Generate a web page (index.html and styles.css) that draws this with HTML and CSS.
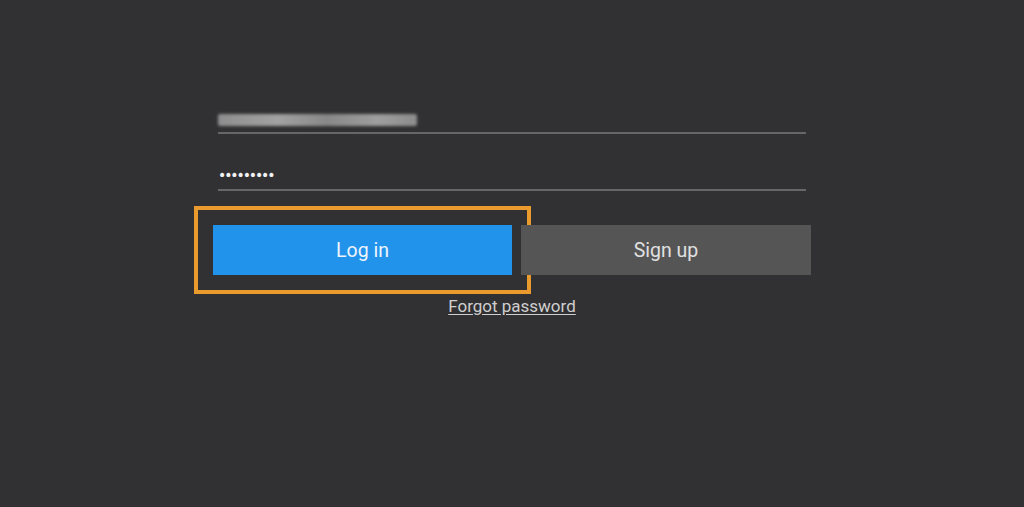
FILE: index.html
```html
<!DOCTYPE html>
<html>
<head>
<meta charset="utf-8">
<link rel="stylesheet" href="styles.css">
</head>
<body>
<main class="form">
  <div class="field field-email">
    <span class="redacted" aria-label="email (hidden)"></span>
  </div>
  <div class="field field-password">
    <span class="dots">•••••••••</span>
  </div>
  <div class="actions">
    <button class="btn btn-login">Log in</button>
    <button class="btn btn-signup">Sign up</button>
  </div>
  <div class="forgot-row">
    <a class="forgot" href="#">Forgot password</a>
  </div>
</main>
</body>
</html>
```

FILE: styles.css
```css
html, body {
  margin: 0;
  padding: 0;
  height: 100%;
}
body {
  background: #313133;
  font-family: Roboto, "Liberation Sans", sans-serif;
  overflow: hidden;
}
.form {
  width: 598px;
  margin-left: 213px;
  padding-top: 101px;
  display: flex;
  flex-direction: column;
}
.field {
  margin: 0 5px;
  border-bottom: 2px solid #666668;
  display: flex;
  align-items: flex-end;
}
.field-email {
  height: 31px;
}
.redacted {
  display: block;
  width: 199px;
  height: 12px;
  margin-bottom: 6px;
  background: linear-gradient(90deg, #8e8e8e 0%, #a2a2a2 30%, #888 55%, #9e9e9e 80%, #8c8c8c 100%);
  filter: blur(1.5px);
  border-radius: 2px;
}
.field-password {
  height: 55px;
}
.dots {
  color: #f2f2f2;
  font-size: 14px;
  letter-spacing: -2.1px;
  line-height: 14px;
  margin-bottom: 7px;
  font-family: "DejaVu Sans", sans-serif;
}
.actions {
  display: flex;
  gap: 9px;
  margin-top: 34px;
}
.btn {
  height: 50px;
  border: 0;
  padding: 0;
  margin: 0;
  font-family: Roboto, "Liberation Sans", sans-serif;
  font-size: 19.5px;
  cursor: pointer;
}
.btn-login {
  width: 299px;
  background: #2293ea;
  color: #eef5fd;
  outline: 4px solid #eb9b2d;
  outline-offset: 15px;
}
.btn-signup {
  width: 290px;
  background: #555556;
  color: #e0e0e0;
}
.forgot-row {
  display: flex;
  justify-content: center;
  margin-top: 21px;
}
.forgot {
  color: #cfcfcf;
  font-size: 17px;
  text-decoration: underline;
  text-underline-offset: 2px;
}
```
